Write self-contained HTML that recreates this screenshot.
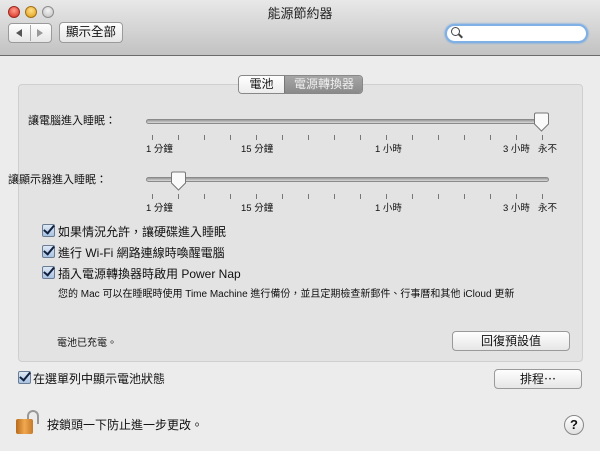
<!DOCTYPE html>
<html><head><meta charset="utf-8"><style>
*{margin:0;padding:0;box-sizing:border-box}
body{width:600px;height:451px;overflow:hidden;background:#ececec;font-family:"Liberation Sans","Noto Sans CJK TC",sans-serif;font-size:12px;color:#111;position:relative}
.a{position:absolute;white-space:nowrap}
.tb{position:absolute;left:0;top:0;width:600px;height:56px;background:linear-gradient(#e8e8e8,#c2c2c2);border-bottom:1px solid #6b6b6b}
.btn{position:absolute;background:linear-gradient(#fefefe,#e6e6e6);border:1px solid #9a9a9a;border-radius:4px;text-align:center;font-size:12px}
.grp{position:absolute;left:18px;top:84px;width:565px;height:278px;background:#e3e3e3;border:1px solid #cfcfcf;border-radius:4px}
.track{position:absolute;left:146px;width:403px;height:5px;border-radius:3px;background:linear-gradient(#9a9a9a,#d8d8d8);border:1px solid #8a8a8a}
.tick{position:absolute;width:1px;height:5px;background:#777}
.lbl{position:absolute;font-size:9.5px;white-space:nowrap}
.cb{position:absolute;width:13px;height:13px;border:1px solid #6a7d95;border-radius:2px;background:linear-gradient(#dfe9f5,#a9c2e0)}
.cb::after{content:"";position:absolute;left:3px;top:-2px;width:4px;height:9px;border:solid #102040;border-width:0 2px 2px 0;transform:rotate(40deg)}
</style></head><body>
<div class="tb"></div>
<div class="a" style="left:8px;top:6px;width:12px;height:12px;border-radius:50%;background:radial-gradient(circle at 50% 35%,#ff9c8c,#d8281a);border:1px solid #9b2a20"></div>
<div class="a" style="left:25px;top:6px;width:12px;height:12px;border-radius:50%;background:radial-gradient(circle at 50% 35%,#ffe08a,#e09a10);border:1px solid #a07018"></div>
<div class="a" style="left:42px;top:6px;width:12px;height:12px;border-radius:50%;background:radial-gradient(circle at 50% 35%,#f4f4f4,#bdbdbd);border:1px solid #8c8c8c"></div>
<div class="a" style="left:0;top:3px;width:600px;text-align:center;font-size:13px;color:#222">能源節約器</div>
<div class="btn" style="left:8px;top:23px;width:44px;height:20px"></div>
<div class="a" style="left:30px;top:25px;width:1px;height:16px;background:#aaa"></div>
<div class="a" style="left:16px;top:29px;border:4px solid transparent;border-right:6px solid #555;border-left:0"></div>
<div class="a" style="left:37px;top:29px;border:4px solid transparent;border-left:6px solid #999;border-right:0"></div>
<div class="btn" style="left:59px;top:22px;width:64px;height:21px;line-height:19px;font-size:12.5px">顯示全部</div>
<div class="a" style="left:445px;top:24px;width:143px;height:19px;border-radius:10px;background:#fff;border:2px solid #7fb0e6;box-shadow:0 0 2px #5a9ae0"></div>
<div class="a" style="left:451px;top:27px;width:9px;height:9px;border-radius:50%;border:1.5px solid #444"></div>
<div class="a" style="left:458px;top:35px;width:5px;height:2px;background:#444;transform:rotate(45deg)"></div>

<div class="grp"></div>
<div class="a" style="left:238px;top:75px;width:125px;height:19px;border:1px solid #888;border-radius:4px;overflow:hidden;background:#fff">
<div class="a" style="left:0;top:0;width:45px;height:17px;background:linear-gradient(#fff,#ececec);text-align:center;line-height:17px;font-size:12px">電池</div>
<div class="a" style="left:45px;top:0;width:79px;height:17px;background:linear-gradient(#a6a6a6,#8a8a8a);color:#eee;text-align:center;line-height:17px;font-size:12px;border-left:1px solid #777">電源轉換器</div>
</div>

<div class="a" style="left:28px;top:112px;font-size:11px">讓電腦進入睡眠：</div>
<div class="track" style="top:119px"></div>
<div class="a" style="left:533px;top:112px;width:17px;height:20px"><svg width="17" height="20"><path d="M1.5 2.5Q1.5 1 3 1H14Q15.5 1 15.5 2.5V12L8.5 19L1.5 12Z" fill="#fafafa" stroke="#777"/></svg></div>
<div class="a" style="left:8px;top:171px;font-size:11px">讓顯示器進入睡眠：</div>
<div class="track" style="top:177px"></div>
<div class="a" style="left:170px;top:171px;width:17px;height:20px"><svg width="17" height="20"><path d="M1.5 2.5Q1.5 1 3 1H14Q15.5 1 15.5 2.5V12L8.5 19L1.5 12Z" fill="#fafafa" stroke="#777"/></svg></div>
<div id="t"></div>

<div class="cb" style="left:42px;top:224px"></div><div class="a" style="left:58px;top:223px">如果情況允許，讓硬碟進入睡眠</div>
<div class="cb" style="left:42px;top:245px"></div><div class="a" style="left:58px;top:244px">進行 Wi-Fi 網路連線時喚醒電腦</div>
<div class="cb" style="left:42px;top:266px"></div><div class="a" style="left:58px;top:265px">插入電源轉換器時啟用 Power Nap</div>
<div class="a" style="left:58px;top:285px;font-size:10px">您的 Mac 可以在睡眠時使用 Time Machine 進行備份，並且定期檢查新郵件、行事曆和其他 iCloud 更新</div>
<div class="a" style="left:57px;top:334px;font-size:10px">電池已充電。</div>
<div class="btn" style="left:452px;top:331px;width:118px;height:20px;line-height:18px">回復預設值</div>
<div class="cb" style="left:18px;top:371px"></div><div class="a" style="left:33px;top:370px">在選單列中顯示電池狀態</div>
<div class="btn" style="left:494px;top:369px;width:88px;height:20px;line-height:18px">排程⋯</div>
<div class="a" style="left:27px;top:410px;width:12px;height:14px;border:2.5px solid #999;border-bottom:0;border-radius:6px 6px 0 0"></div>
<div class="a" style="left:16px;top:419px;width:17px;height:15px;border-radius:2px;background:linear-gradient(90deg,#b86a1a,#f0a850,#c57a28)"></div>
<div class="a" style="left:47px;top:416px">按鎖頭一下防止進一步更改。</div>
<div class="a" style="left:564px;top:415px;width:20px;height:20px;border-radius:50%;border:1px solid #888;background:linear-gradient(#fff,#e0e0e0);text-align:center;line-height:18px;font-weight:bold;font-size:13px">?</div>
<script>
var h='';var L=[[146,'1 分鐘'],[241,'15 分鐘'],[375,'1 小時'],[503,'3 小時'],[538,'永不']];
[135,194].forEach(function(y){for(var i=0;i<16;i++){var x=152+26*i;h+='<div class="tick" style="left:'+x+'px;top:'+y+'px"></div>';}
L.forEach(function(l){h+='<div class="lbl" style="left:'+l[0]+'px;top:'+(y+6)+'px">'+l[1]+'</div>';});});
document.getElementById('t').innerHTML=h;
</script>
</body></html>
